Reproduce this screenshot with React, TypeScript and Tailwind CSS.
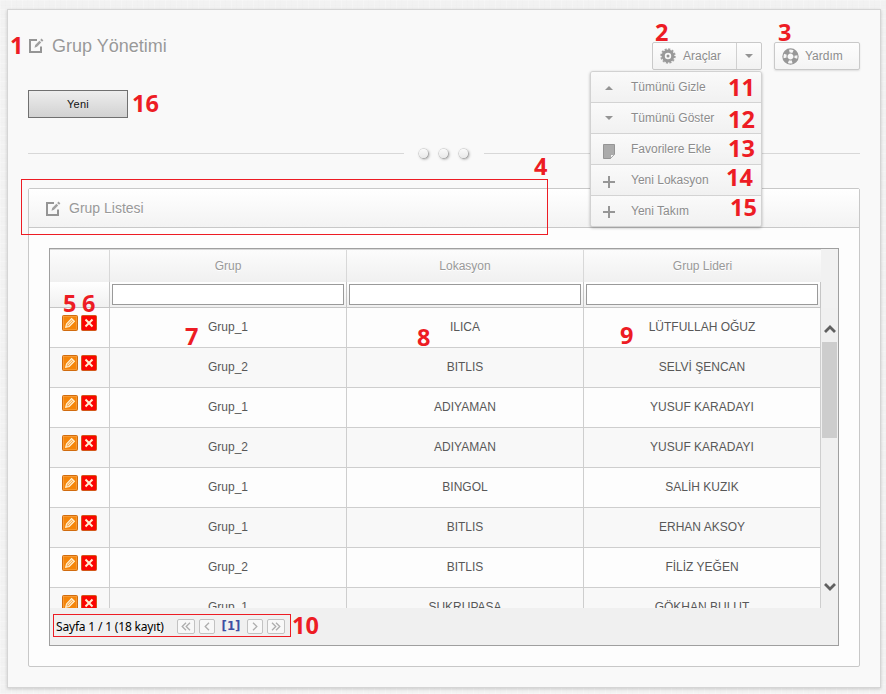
import React from "react";

const marks: { n: string; at: string }[] = [
  { n: "1", at: "left-[10px] top-[32px]" },
  { n: "2", at: "left-[655px] top-[19px]" },
  { n: "3", at: "left-[778px] top-[19px]" },
  { n: "4", at: "left-[534px] top-[153px]" },
  { n: "5", at: "left-[63px] top-[290px]" },
  { n: "6", at: "left-[82px] top-[290px]" },
  { n: "7", at: "left-[185px] top-[323px]" },
  { n: "8", at: "left-[417px] top-[324px]" },
  { n: "9", at: "left-[620px] top-[322px]" },
  { n: "10", at: "left-[292px] top-[612px]" },
  { n: "11", at: "left-[728px] top-[74px]" },
  { n: "12", at: "left-[728px] top-[106px]" },
  { n: "13", at: "left-[728px] top-[135px]" },
  { n: "14", at: "left-[726px] top-[164px]" },
  { n: "15", at: "left-[730px] top-[194px]" },
  { n: "16", at: "left-[132px] top-[90px]" },
];

const rows: [string, string, string][] = [
  ["Grup_1", "ILICA", "LÜTFULLAH OĞUZ"],
  ["Grup_2", "BITLIS", "SELVİ ŞENCAN"],
  ["Grup_1", "ADIYAMAN", "YUSUF KARADAYI"],
  ["Grup_2", "ADIYAMAN", "YUSUF KARADAYI"],
  ["Grup_1", "BINGOL", "SALİH KUZIK"],
  ["Grup_1", "BITLIS", "ERHAN AKSOY"],
  ["Grup_2", "BITLIS", "FİLİZ YEĞEN"],
  ["Grup_1", "ŞUKRUPAŞA", "GÖKHAN BULUT"],
];

function EditIcon() {
  return (
    <svg width="16" height="16" viewBox="0 0 16 16" fill="none" className="shrink-0">
      <path d="M9 2H2V14H13V8.5" stroke="#959595" strokeWidth="2" />
      <path d="M6.5 9.8L7.2 7L11.4 2.8L13.2 4.6L9 8.8Z" fill="#a0a0a0" />
      <path d="M12.2 2L13.6.6L15.4 2.4L14 3.8Z" fill="#a0a0a0" />
    </svg>
  );
}

function GearIcon() {
  return (
    <svg width="16" height="16" viewBox="-8 -8 16 16" className="shrink-0">
      <circle r="6.8" fill="none" stroke="#a0a0a0" strokeWidth="1.8" strokeDasharray="2.1 1.46" />
      <circle r="4.8" fill="none" stroke="#999" strokeWidth="3.2" />
      <circle r="1.5" fill="#949494" />
    </svg>
  );
}

function BuoyIcon() {
  return (
    <svg width="17" height="17" viewBox="-8.5 -8.5 17 17" className="shrink-0">
      <circle r="5.6" fill="none" stroke="#989898" strokeWidth="5.2" />
      <circle r="5.5" fill="none" stroke="#f6f6f6" strokeWidth="3" strokeDasharray="3.8 4.839" strokeDashoffset="1.9" />
    </svg>
  );
}

function Triangle({ up = false }: { up?: boolean }) {
  return (
    <svg width="8" height="4" viewBox="0 0 8 4">
      <path d={up ? "M0 4L4 0L8 4Z" : "M0 0H8L4 4Z"} fill="#949494" />
    </svg>
  );
}

function NoteIcon() {
  return (
    <svg width="12" height="15" viewBox="0 0 12 15">
      <path d="M.5 .5H11.5V10L7.5 14.5H.5Z" fill="#ababab" stroke="#959595" />
      <path d="M7.5 14.5V10.5H11.5Z" fill="#f2f2f2" stroke="#999" strokeWidth=".7" />
    </svg>
  );
}

function PlusIcon() {
  return (
    <svg width="12" height="12" viewBox="0 0 12 12">
      <path d="M6 0V12M0 6H12" stroke="#969696" strokeWidth="2" />
    </svg>
  );
}

const menu: { label: string; icon: React.ReactNode; pad: string }[] = [
  { label: "Tümünü Gizle", icon: <Triangle up />, pad: "pt-[2px]" },
  { label: "Tümünü Göster", icon: <Triangle />, pad: "pt-0" },
  { label: "Favorilere Ekle", icon: <NoteIcon />, pad: "pt-1" },
  { label: "Yeni Lokasyon", icon: <PlusIcon />, pad: "pt-1" },
  { label: "Yeni Takım", icon: <PlusIcon />, pad: "pt-[2px]" },
];

function RowActions() {
  return (
    <div className="flex gap-[3px] pl-3 pt-[7px]">
      <svg width="16" height="16" viewBox="0 0 16 16">
        <rect x=".5" y=".5" width="15" height="15" rx="1" fill="#f58509" stroke="#d06c10" />
        <rect x="1.5" y="1.5" width="13" height="13" fill="none" stroke="#fba850" strokeWidth=".6" />
        <path d="M3.7 12.3L4.5 8.9L9.6 3.5L12.4 6.2L7.2 11.5Z" fill="#f9a94d" stroke="#fff3d8" strokeWidth="1.1" />
        <path d="M5.6 10.2L10.6 5.2" stroke="#fff3d8" strokeWidth="1" />
      </svg>
      <svg width="16" height="16" viewBox="0 0 16 16">
        <rect x=".5" y=".5" width="15" height="15" rx="1" fill="#fb0500" stroke="#d2571a" />
        <path d="M4.5 4.5L11.5 11.5M11.5 4.5L4.5 11.5" stroke="#ffefcf" strokeWidth="2" />
      </svg>
    </div>
  );
}

function PagerButton({ double = false, next = false }: { double?: boolean; next?: boolean }) {
  return (
    <span
      className={`flex h-[15px] items-center justify-center rounded-[2px] border border-[#c2c2c2] bg-[#f8f8f8] ${double ? "w-[18px]" : "w-4"}`}
    >
      <svg width="10" height="9" viewBox="0 0 10 9" fill="none" stroke="#adadad" strokeWidth="1.3" className={next ? "rotate-180" : ""}>
        {double ? <path d="M5 .7L1.2 4.5L5 8.3M9 .7L5.2 4.5L9 8.3" /> : <path d="M7 .7L3.2 4.5L7 8.3" />}
      </svg>
    </span>
  );
}

const glow = "[text-shadow:0_1px_0_#fff]";

export default function App() {
  return (
    <div className="relative h-[694px] w-[886px] overflow-hidden bg-[#f2f2f2] bg-[repeating-linear-gradient(90deg,#ffffff38_0_1px,transparent_1px_5px,#ececec38_5px_6px,transparent_6px_11px),repeating-linear-gradient(0deg,#ffffff38_0_1px,transparent_1px_4px,#ececec38_4px_5px,transparent_5px_9px)] pl-[7px] pt-[9px] font-['Liberation_Sans',sans-serif] text-xs text-[#8c8c8c]">
      <div className="h-[679px] w-[874px] border border-[#d5d5d5] bg-[#f9f9f9] px-5 shadow-[0_1px_3px_#0000002a]">
        <header className="flex h-[80px] items-start justify-between pt-8">
          <h1 className={`-mt-[9px] flex h-[26px] items-center text-[18px] leading-[26px] text-[#999] ${glow}`}>
            <EditIcon />
            <span className="ml-2">Grup Yönetimi</span>
          </h1>
          <div className="flex gap-3">
            <div className="relative">
              <div className="flex h-[28px] w-[110px] rounded-[2px] border border-[#c9c9c9] bg-linear-to-b from-[#fdfdfd] to-[#f2f2f2]">
                <div className={`flex w-[84px] items-center gap-[7px] border-r border-[#d0d0d0] pl-[7px] ${glow}`}>
                  <GearIcon />
                  <span className="-mt-px">Araçlar</span>
                </div>
                <div className="flex flex-1 items-center justify-center">
                  <Triangle />
                </div>
              </div>
              <div className="absolute right-0 top-[29px] z-10 h-[156px] w-[172px] overflow-hidden rounded-[3px] border border-[#d2d2d2] bg-[#f5f5f5] shadow-[0_1px_3px_#00000048]">
                {menu.map((item) => (
                  <div
                    key={item.label}
                    className={`flex h-[31px] items-center border-b border-[#d3d3d3] bg-linear-to-b from-[#fafafa] to-[#f1f1f1] last:h-[30px] last:border-b-0 ${glow}`}
                  >
                    <span className={`flex w-9 justify-center ${item.pad}`}>{item.icon}</span>
                    <span className="ml-1">{item.label}</span>
                  </div>
                ))}
              </div>
            </div>
            <div className={`flex h-[28px] w-[86px] items-center gap-[6px] rounded-[2px] border border-[#c9c9c9] bg-linear-to-b from-[#fdfdfd] to-[#f4f4f4] pl-[7px] shadow-[0_1px_2px_#0000001c] ${glow}`}>
              <BuoyIcon />
              <span className="-mt-px">Yardım</span>
            </div>
          </div>
        </header>

        <button className="flex h-7 w-[100px] items-center justify-center border border-[#707070] bg-linear-to-b from-[#ededed] to-[#d2d2d2] text-[11px] tracking-[0.2px] text-[#111]">
          Yeni
        </button>

        <div className="mt-[30px] flex h-[10px] items-center">
          <div className="h-px w-[376px] bg-[#d8d8d8]" />
          <div className="flex w-20 justify-center gap-[11px] pr-px">
            {[0, 1, 2].map((i) => (
              <span key={i} className="size-[9px] rounded-full bg-linear-to-b from-[#fafafa] to-[#e9e9e9] shadow-[1px_1px_3px_#00000070,0_0_0_0.5px_#ccc]" />
            ))}
          </div>
          <div className="h-px flex-1 bg-[#d8d8d8]" />
        </div>

        <section className="mt-[30px] h-[479px] rounded-[2px] border border-[#c8c8c8] bg-[#fdfdfd]">
          <div className={`flex h-[39px] items-center border-b border-[#c8c8c8] bg-linear-to-b from-white to-[#f3f3f3] pl-[16px] text-[14px] text-[#999] ${glow}`}>
            <span className="pt-[2px]"><EditIcon /></span>
            <span className="ml-[8px]">Grup Listesi</span>
          </div>

          <div className="ml-5 mt-5 flex h-[398px] w-[790px] flex-col border border-[#9f9f9f] bg-[#f0f0f0]">
            <div className="flex h-[59px]">
              <div className="grid w-[771px] grid-cols-[60px_237px_237px_237px] grid-rows-[33px_26px]">
                {["", "Grup", "Lokasyon", "Grup Lideri"].map((h) => (
                  <div key={h} className={`flex items-center justify-center border-r border-t border-[#d8d8d8] bg-linear-to-b from-[#fcfcfc] to-[#f0f0f0] text-[#999] nth-4:border-r-0 ${glow}`}>
                    {h}
                  </div>
                ))}
                <div className="border-b border-r border-[#c5c5c5] bg-linear-to-b from-white to-[#f0f0f0]" />
                {["Grup", "Lokasyon", "Grup Lideri"].map((h) => (
                  <div key={h} className="border-b border-r border-[#c5c5c5] bg-linear-to-b from-white to-[#f0f0f0] pl-[2px] pt-[2px]">
                    <input aria-label={h} className="block h-[21px] w-[232px] border border-[#9a9a9a] bg-white" />
                  </div>
                ))}
              </div>
              <div className="flex-1 bg-[#f1f1f1]" />
            </div>

            <div className="flex h-[300px]">
              <div className="w-[771px] overflow-hidden">
                {rows.map((row, i) => (
                  <div key={i} className="grid h-10 grid-cols-[60px_237px_237px_237px] border-b border-[#cecece] odd:bg-[#fdfdfd] even:bg-[#f8f8f8]">
                    <div className="border-r border-[#cecece]"><RowActions /></div>
                    {row.map((cell, j) => (
                      <div key={j} className="flex items-center justify-center border-r border-[#cecece] pb-[2px] text-[#585858]">
                        {cell}
                      </div>
                    ))}
                  </div>
                ))}
              </div>
              <div className="flex flex-1 flex-col items-center bg-[#f0f0f0]">
                <svg width="12" height="10" viewBox="0 0 12 10" className="mt-4" fill="none" stroke="#606060" strokeWidth="2.8">
                  <path d="M1 8L6 3L11 8" />
                </svg>
                <div className="mt-2 h-24 w-[15px] bg-[#cdcdcd]" />
                <svg width="12" height="10" viewBox="0 0 12 10" className="mt-auto mb-4" fill="none" stroke="#606060" strokeWidth="2.8">
                  <path d="M1 2L6 7L11 2" />
                </svg>
              </div>
            </div>

            <div className="flex h-[37px] items-center pb-px pl-[6px] font-['DejaVu_Sans_Condensed','DejaVu_Sans',sans-serif] text-black">
              <span className="w-[121px] whitespace-nowrap pt-px font-['Noto_Sans',sans-serif] text-[12px] tracking-[-0.18px]">Sayfa 1 / 1 (18 kayıt)</span>
              <span className="flex items-center gap-1">
                <PagerButton double />
                <PagerButton />
              </span>
              <span className="w-8 text-center text-[13px] font-bold text-[#3f4fa3]">[1]</span>
              <span className="flex items-center gap-1">
                <PagerButton next />
                <PagerButton double next />
              </span>
            </div>
          </div>
        </section>
      </div>

      <div className="absolute left-[21px] top-[179px] h-[56px] w-[527px] border border-[#ed1c24]" />
      <div className="absolute left-[53px] top-[614px] h-[23px] w-[238px] border border-[#ed1c24]" />
      {marks.map((m) => (
        <span key={m.n} className={`absolute z-20 font-['Open_Sans',sans-serif] text-[23.5px] font-bold leading-[26px] text-[#ed1c24] ${m.at}`}>
          {m.n}
        </span>
      ))}
    </div>
  );
}
